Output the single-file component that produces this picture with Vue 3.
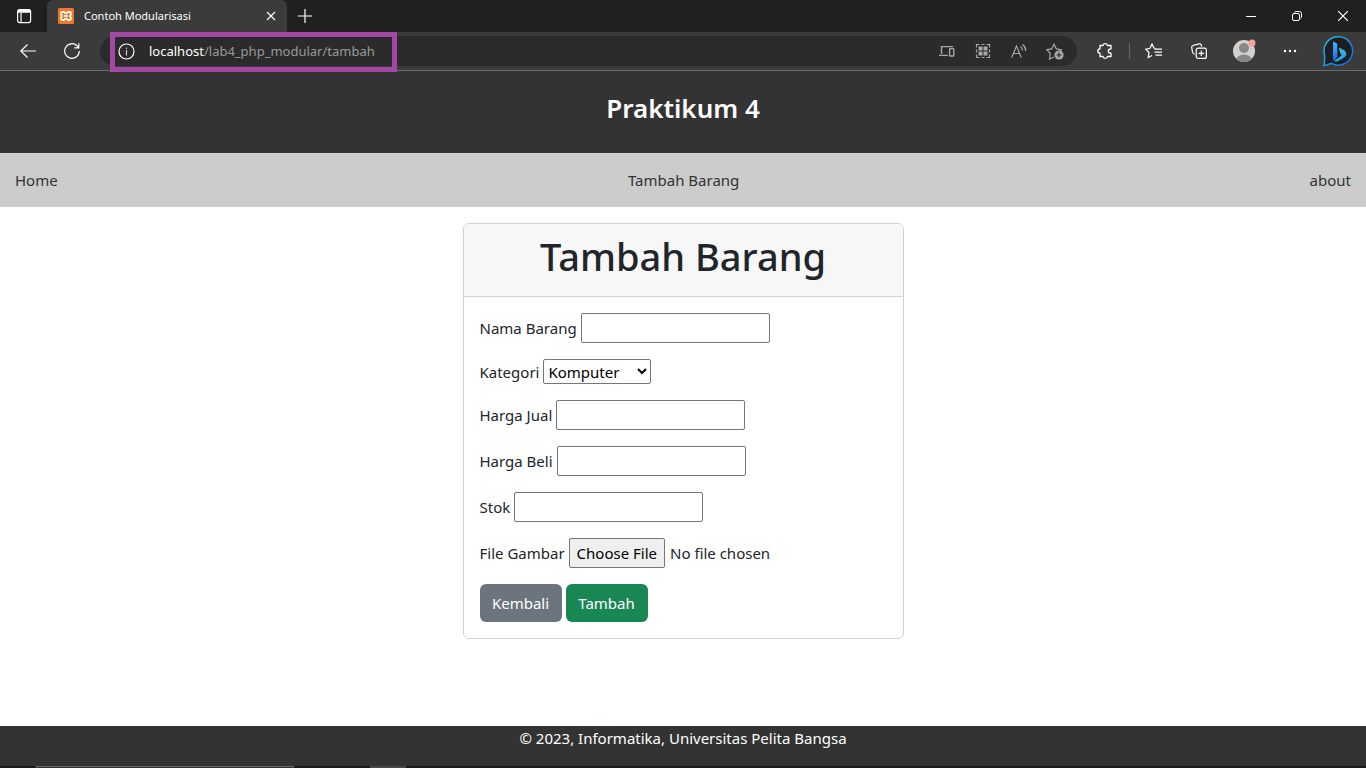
<script setup>
import { ref } from 'vue'

const form = ref({ nama: '', kategori: 'Komputer', jual: '', beli: '', stok: '' })
const categories = ['Komputer', 'Elektronik', 'Hand Phone']
</script>

<template>
  <div class="window">
    <div class="tabstrip">
      <button class="icon-btn actions" aria-label="Tab actions">
        <svg width="16" height="16" viewBox="0 0 16 16" fill="none" stroke="#fff" stroke-width="1.2">
          <rect x="1.6" y="1.6" width="13" height="13" rx="2" />
          <path d="M2 2.600h12M2 4h12" stroke-width="1.600" />
          <path d="M5 5v9" />
        </svg>
      </button>
      <div class="tab">
        <svg width="16" height="16" viewBox="0 0 16 16">
          <rect width="16" height="16" rx="1.5" fill="#f37623" />
          <path d="M4.500 4H6L8 5.600 10 4h1.500Q13 4 13 5.500V6.500L12 8l1 1.500v1Q13 12 11.500 12H10L8 10.400 6 12H4.500Q3 12 3 10.500v-1L4 8 3 6.500v-1Q3 4 4.500 4z" fill="none" stroke="#fff" stroke-width="1.800" stroke-linejoin="round" />
          <path d="M6 8h4" stroke="#fff" stroke-width="1.600" />
        </svg>
        <span class="tab-title">Contoh Modularisasi</span>
        <button class="icon-btn" aria-label="Close tab">
          <svg width="10" height="10" viewBox="0 0 10 10" stroke="#fff" stroke-width="1.2"><path d="M1 1l8 8M9 1L1 9" /></svg>
        </button>
      </div>
      <button class="icon-btn new-tab" aria-label="New tab">
        <svg width="14" height="14" viewBox="0 0 14 14" stroke="#fff" stroke-width="1.2"><path d="M7 0v14M0 7h14" /></svg>
      </button>
      <div class="window-controls">
        <button class="icon-btn" aria-label="Minimize">
          <svg width="10" height="10" viewBox="0 0 10 10" stroke="#fff"><path d="M0 5.500h10" /></svg>
        </button>
        <button class="icon-btn" aria-label="Restore">
          <svg width="10" height="10" viewBox="0 0 10 10" fill="none" stroke="#fff">
            <rect x=".5" y="2.500" width="7" height="7" rx="1.500" />
            <path d="M2.500 1.500Q2.800.5 4 .5h3.500q2 0 2 2V6q0 1-1 1.500" />
          </svg>
        </button>
        <button class="icon-btn" aria-label="Close">
          <svg width="10" height="10" viewBox="0 0 10 10" stroke="#fff" stroke-width="1.200"><path d="M0 0l10 10M10 0L0 10" /></svg>
        </button>
      </div>
    </div>

    <div class="toolbar">
      <button class="icon-btn" aria-label="Back">
        <svg width="16" height="14" viewBox="0 0 16 14" fill="none" stroke="#fff" stroke-width="1.200"><path d="M16 7H.8M7.500.5L.8 7l6.700 6.500" /></svg>
      </button>
      <button class="icon-btn" aria-label="Refresh">
        <svg width="16" height="16" viewBox="0 0 16 16" fill="none" stroke="#fff" stroke-width="1.200"><path d="M15.300 8A7.300 7.300 0 1 1 13 2.700L14.500 4.500M14.800.2v4.600h-4.600" /></svg>
      </button>
      <div class="address">
        <button class="icon-btn info" aria-label="Site information">
          <svg width="17" height="17" viewBox="0 0 17 17" fill="none" stroke="#fff" stroke-width="1.200"><circle cx="8.500" cy="8.500" r="7.500" /><path d="M8.500 7v5.500M8.500 4.500v1.400" stroke="#c8c8c8" /></svg>
        </button>
        <div class="url"><span class="host">localhost</span>/lab4_php_modular/tambah</div>
        <div class="address-actions">
          <button class="icon-btn" aria-label="Send to device">
            <svg width="16" height="12" viewBox="0 0 16 12" fill="none" stroke="#a8a8a8" stroke-width="1.400"><path d="M2.500 9V1.600h11.500M0 10.400h9" /><rect x="10.600" y="3.600" width="4.200" height="7.400" rx=".6" /></svg>
          </button>
          <button class="icon-btn" aria-label="QR code">
            <svg width="16" height="16" viewBox="0 0 16 16" fill="none" stroke="#a8a8a8" stroke-width="1.200"><path d="M1.500 4.500v-3h3M11.500 1.500h3v3M14.500 11.500v3h-3M4.500 14.500h-3v-3M6.500 1.500h3M6.500 14.500h3M1.500 6.500v3M14.500 6.500v3" /><path d="M3.500 3.500h4v4h-4zM8.500 3.500h4v4h-4zM3.500 8.500h4v4h-4zM8.500 8.500h4v4h-4z" fill="#a8a8a8" stroke="none" /></svg>
          </button>
          <button class="icon-btn" aria-label="Read aloud">
            <svg width="16" height="14" viewBox="0 0 16 14" fill="none" stroke="#a8a8a8" stroke-width="1.200"><path d="M.7 13.500L5.500 2l4.800 11.500M2.400 9.500h6.200M9.500 2.500q2 1.500 2 4M11.500.5q3.500 2.500 3.200 6.500" /></svg>
          </button>
          <button class="icon-btn" aria-label="Add to favorites">
            <svg width="18" height="17" viewBox="0 0 18 17" fill="none" stroke="#a8a8a8" stroke-width="1.200"><path d="M8 14l-4.500 2 .8-5.500L.8 6.800l4.900-.9L8 1.200l2.400 4.700 5 .9-1.600 1.700" /><circle cx="13" cy="12" r="4.600" fill="#a8a8a8" stroke="none" /><path d="M13 9.500v5M10.500 12h5" stroke="#2b2b2b" /></svg>
          </button>
        </div>
      </div>
      <button class="icon-btn extensions" aria-label="Extensions">
        <svg width="16" height="16" viewBox="0 0 16 16" fill="none" stroke="#fff" stroke-width="1.300" stroke-linejoin="round"><path d="M3 2.500h3Q6.300.7 8.200.7t2.200 1.800H14v3.300Q11.300 5.800 11.300 8t2.700 2.200v3.300h-3.600q-.3 1.800-2.200 1.800T6 13.500H3v-3.300Q.8 10 .8 8T3 5.800z" /></svg>
      </button>
      <span class="divider"></span>
      <button class="icon-btn" aria-label="Favorites">
        <svg width="17" height="16" viewBox="0 0 17 16" fill="none" stroke="#fff" stroke-width="1.200"><path d="M10.500 5.500L9 5 7 1 5 5.300l-4.200.8L4 9.500 3.200 14.500 7 12.500M9.500 6.200H17M9.500 9.200H17M10.500 12.200H17" /></svg>
      </button>
      <button class="icon-btn" aria-label="Collections">
        <svg width="16" height="16" viewBox="0 0 16 16" fill="none" stroke="#fff" stroke-width="1.200"><path d="M3.500 11.500Q1.800 10.500 1.500 9L.7 4.500Q.6 3 2 2.500l6-1.700q1.600-.3 2.200 1l.5 1.700" /><rect x="5.200" y="5.200" width="10.200" height="10.200" rx="2" /><path d="M10.300 7.500v5.600M7.500 10.300h5.600" /></svg>
      </button>
      <button class="icon-btn" aria-label="Profile">
        <svg width="24" height="24" viewBox="0 0 24 24"><defs><clipPath id="avatar"><circle cx="12" cy="12" r="11" /></clipPath></defs><circle cx="12" cy="12" r="11" fill="#d2d0ce" /><circle cx="12" cy="9" r="5" fill="#8a8886" /><ellipse cx="12" cy="21.500" rx="8" ry="6" fill="#8a8886" clip-path="url(#avatar)" /><circle cx="20" cy="4" r="3.500" fill="#f8a09a" /></svg>
      </button>
      <button class="icon-btn" aria-label="Settings and more">
        <svg width="14" height="4" viewBox="0 0 14 4" fill="#fff"><circle cx="2" cy="2" r="1.200" /><circle cx="7" cy="2" r="1.200" /><circle cx="12" cy="2" r="1.200" /></svg>
      </button>
      <button class="icon-btn" aria-label="Bing">
        <svg width="32" height="32" viewBox="0 0 32 32">
          <defs>
            <linearGradient id="ring" x1="0" y1="0" x2="1" y2="1"><stop offset="0" stop-color="#20c4e8" /><stop offset="1" stop-color="#1765d8" /></linearGradient>
            <linearGradient id="b1" x1="0" y1="0" x2="0" y2="1"><stop offset="0" stop-color="#48b4ff" /><stop offset="1" stop-color="#1768e8" /></linearGradient>
            <linearGradient id="b2" x1="0" y1="0" x2="1" y2="1"><stop offset="0" stop-color="#38dfd0" /><stop offset="1" stop-color="#2388f0" /></linearGradient>
          </defs>
          <path d="M16.500 1.700a14.200 14.200 0 1 1-7 26.600Q5 30.300 1.800 30.500 2.800 28 2.600 20A14.200 14.200 0 0 1 16.500 1.700z" fill="#1c1e22" stroke="url(#ring)" stroke-width="1.500" />
          <path d="M11 6.500l3.500 1.800q.8.500.8 1.500v11.700l-3 4.500q-1.300-1-1.300-3z" fill="url(#b1)" />
          <path d="M17 12.500l5.500 3q2.500 1.600 1.700 4.500-.6 2-3 3.300l-5.500 3q-2 1-3.500-.2l7.500-5.600-1.500-3z" fill="url(#b2)" />
        </svg>
      </button>
      <span class="highlight"></span>
    </div>

    <header class="site-header"><h1>Praktikum 4</h1></header>
    <nav class="site-nav">
      <a href="#home">Home</a>
      <a href="#tambah">Tambah Barang</a>
      <a href="#about">about</a>
    </nav>

    <main>
      <section class="card">
        <div class="card-header"><h2>Tambah Barang</h2></div>
        <form class="card-body" @submit.prevent>
          <div class="row"><label for="nama">Nama Barang</label><input id="nama" v-model="form.nama" type="text" /></div>
          <div class="row">
            <label for="kategori">Kategori</label>
            <select id="kategori" v-model="form.kategori">
              <option v-for="c in categories" :key="c">{{ c }}</option>
            </select>
          </div>
          <div class="row"><label for="jual">Harga Jual</label><input id="jual" v-model="form.jual" type="text" /></div>
          <div class="row"><label for="beli">Harga Beli</label><input id="beli" v-model="form.beli" type="text" /></div>
          <div class="row"><label for="stok">Stok</label><input id="stok" v-model="form.stok" type="text" /></div>
          <div class="row"><label for="gambar">File Gambar</label><input id="gambar" type="file" /></div>
          <div class="row">
            <button type="button" class="btn back">Kembali</button>
            <button type="submit" class="btn add">Tambah</button>
          </div>
        </form>
      </section>
    </main>

    <footer>© 2023, Informatika, Universitas Pelita Bangsa</footer>
    <div class="taskbar"><span class="search"></span><span class="running"></span></div>
  </div>
</template>

<style>
body { margin: 0; }
</style>

<style scoped>
* { box-sizing: border-box; }
.window {
  min-height: 100vh;
  display: flex;
  flex-direction: column;
  background: #fff;
  color: #212529;
  font: 15px/24px "Noto Sans", "Open Sans", sans-serif;
}
button, input, select { font: inherit; }
h1, h2 { margin: 0; font-weight: 600; }
.icon-btn {
  display: flex;
  align-items: center;
  justify-content: center;
  padding: 0;
  border: 0;
  background: none;
}
.icon-btn svg { flex: none; }

.tabstrip { display: flex; height: 32px; background: #202020; }
.actions { width: 47px; }
.tab {
  display: flex;
  align-items: center;
  width: 240px;
  padding: 0 10px 0 11px;
  border-radius: 6px 6px 0 0;
  background: #3b3b3b;
  color: #fff;
  font-size: 11px;
}
.tab-title { flex: 1; margin-left: 10px; }
.tab .icon-btn { width: 12px; height: 20px; }
.new-tab { width: 35px; }
.window-controls { display: flex; margin-left: auto; }
.window-controls .icon-btn { width: 46px; }

.toolbar {
  position: relative;
  display: grid;
  grid-template-columns: 56px 32px 1fr 52px 1px 47px 44px 46px 46px 50px;
  align-items: center;
  height: 39px;
  padding-right: 3px;
  border-bottom: 1px solid #6c6c6c;
  background: #3b3b3b;
}
.toolbar > .icon-btn { height: 36px; }
.toolbar > .extensions { padding-left: 4px; }
.divider { height: 16px; background: #666; }
.address {
  display: flex;
  align-items: center;
  height: 30px;
  margin-left: 12px;
  padding: 0 4px 0 8px;
  border-radius: 15px;
  background: #2b2b2b;
}
.info { width: 36px; }
.url { margin-left: 5px; color: #999; font-size: 13px; }
.host { color: #fff; }
.address-actions { display: flex; margin-left: auto; }
.address-actions .icon-btn { width: 36px; height: 30px; }
.highlight {
  position: absolute;
  top: 0;
  left: 110px;
  width: 287px;
  height: 40px;
  border: 5px solid #a349a4;
  pointer-events: none;
}

.site-header { padding: 20px 0 28px; background: #333; color: #fff; text-align: center; }
.site-header h1 { font-size: 26px; line-height: 34px; }
.site-nav { display: flex; justify-content: space-between; padding: 15px; background: #ccc; }
.site-nav a { color: #333; text-decoration: none; }

main { flex: 1; padding: 16px; }
.card { max-width: 441px; margin: 0 auto; border: 1px solid #d2d2d2; border-radius: 6px; }
.card-header {
  padding: 8px 16px 16px;
  border-bottom: 1px solid #d2d2d2;
  border-radius: 5px 5px 0 0;
  background: #f7f7f7;
  text-align: center;
}
.card-header h2 { font-size: 38px; font-weight: 500; line-height: 48px; }
.card-body { display: flex; flex-direction: column; gap: 16px; padding: 16px; }
.row { display: flex; align-items: center; gap: 4px; }
.row input[type="text"] { width: 189px; height: 30px; padding: 1px 2px; border: 1px solid #767676; border-radius: 2px; }
.row select { width: 108px; height: 25px; padding: 0; border: 1px solid #767676; border-radius: 2px; background: #fff; color: #000; }
.row input[type="file"] { height: 30px; }
.row input[type="file"]::file-selector-button {
  height: 30px;
  margin: 0 5px 0 0;
  padding: 1px 7px;
  border: 1px solid #767676;
  border-radius: 2px;
  background: #efefef;
  color: #000;
  font: inherit;
}
.btn { width: 82px; height: 38px; padding: 0; border: 0; border-radius: 6px; color: #fff; }
.back { background: #6c757d; }
.add { background: #198754; }

footer { padding-bottom: 16px; background: #333; color: #fff; text-align: center; }
.taskbar { display: flex; gap: 76px; height: 2px; padding-left: 36px; background: #1b1b1b; }
.search { width: 258px; border: 1px solid #666; border-bottom: 0; background: #333; }
.running { width: 36px; background: #484848; }
</style>
